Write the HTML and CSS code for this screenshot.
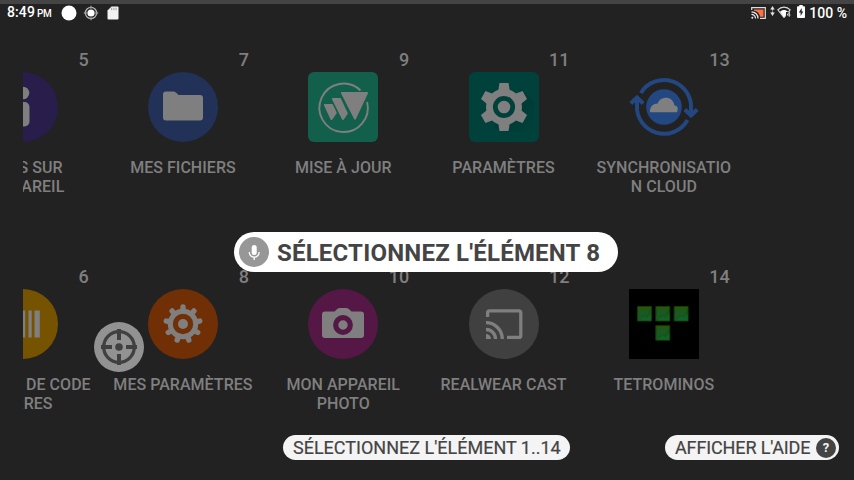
FILE: index.html
```
<!DOCTYPE html>
<html lang="fr">
<head>
<meta charset="utf-8">
<title>Applications</title>
<link rel="stylesheet" href="styles.css">
</head>
<body>
<div class="screen">
  <header class="status">
    <span class="time">8:49<small>PM</small></span>
    <svg class="dot" width="16" height="16" viewBox="0 0 16 16"><circle cx="8" cy="8" r="7.500" fill="#fff"/></svg>
    <svg class="target" width="16" height="16" viewBox="0 0 16 16"><circle cx="8" cy="8" r="5.600" fill="none" stroke="#b5b5b5" stroke-width="1.300"/><path d="M8 .8v3M8 12.200v3M.8 8h3M12.200 8h3" stroke="#999" stroke-width="1.300"/><circle cx="8" cy="8" r="3.600" fill="#fff"/></svg>
    <svg class="sd" width="12" height="14" viewBox="0 0 12 14"><path d="M4.500 .5H10.500a1 1 0 0 1 1 1v11a1 1 0 0 1-1 1h-9a1 1 0 0 1-1-1V4.500z" fill="#f2f2f2"/><path d="M4.700 1.700v2.500M6.900 1.700v2.500M9.100 1.700v2.500" stroke="#999" stroke-width="1"/></svg>
    <span class="grow"></span>
    <svg class="castmini" width="15" height="12" viewBox="0 0 15 12"><path d="M.7 3V.7h13.600v10.600H9" fill="none" stroke="#ddd" stroke-width="1.200"/><path d="M3 2.500h9.500v7.200H9.200C8.500 6.200 6 4 3 3.700z" fill="#ff7043"/><path d="M.5 4.800a6.500 6.500 0 0 1 6.500 6.700M.5 7.300a4 4 0 0 1 4 4.200" fill="none" stroke="#eee" stroke-width="1.200"/><circle cx="1.300" cy="10.800" r="1" fill="#eee"/></svg>
    <svg class="updown" width="5" height="10" viewBox="0 0 5 10"><path d="M2.500 0L4.800 3.500H3.100v1H1.900v-1H.2zM2.500 10L4.800 6.500H3.100v-1H1.900v1H.2z" fill="#ddd"/></svg>
    <svg class="wifi" width="14" height="12" viewBox="0 0 14 12"><path d="M.8 3.800C4.200.2 9.800.2 13.200 3.800L10.500 7.500 7 11.500z" fill="none" stroke="#ddd" stroke-width="1.100"/><path d="M3 5.800C5.500 3.500 8.500 3.500 11 5.800L7 11.500z" fill="#fff"/><path d="M9 6h5v6H9z" fill="#222"/><path d="M12.300 5.800v5M12.500 6L10 9h3.500" fill="none" stroke="#ddd" stroke-width=".9"/></svg>
    <svg class="battery" width="8" height="13" viewBox="0 0 8 13"><path d="M2.300 0h3.400v1.300H7a1 1 0 0 1 1 1V12a1 1 0 0 1-1 1H1a1 1 0 0 1-1-1V2.300a1 1 0 0 1 1-1h1.300z" fill="#fff"/><path d="M4.700 3L1.800 7.600h1.800V11l2.700-4.600H4.700z" fill="#222"/></svg>
    <span class="percent">100 %</span>
  </header>

  <main class="viewport">
    <div class="grid">
      <div class="item"><span class="num">5</span>
        <svg class="icon" viewBox="0 0 70 70"><circle cx="35" cy="35" r="35" fill="#281d4b"/><circle cx="35" cy="21" r="6.300" fill="#7f7f7f"/><path d="M29 30h7.500a5 5 0 0 1 5 5v14.500a5 5 0 0 1-5 5H29z" fill="#7f7f7f"/></svg>
        <span class="label">INFOS SUR<br>L'APPAREIL</span></div>
      <div class="item"><span class="num">7</span>
        <svg class="icon" viewBox="0 0 70 70"><circle cx="35" cy="35" r="35" fill="#213157"/><path d="M18 19.500h7.500q1.800 0 3 1.500l2 2H52a3 3 0 0 1 3 3v19.500a3 3 0 0 1-3 3H18a3 3 0 0 1-3-3v-23a3 3 0 0 1 3-3z" fill="#7f7f7f"/></svg>
        <span class="label">MES FICHIERS</span></div>
      <div class="item"><span class="num">9</span>
        <svg class="icon" viewBox="0 0 70 70"><rect width="70" height="70" rx="6" fill="#12604b"/><path d="M52.500 18.500A24.200 24.200 0 1 0 59.100 30" fill="none" stroke="#7f7f7f" stroke-width="1.900"/><g fill="#7f7f7f" stroke="#7f7f7f" stroke-width="2" stroke-linejoin="round"><path d="M34 21h25L47 46.500zM25 27h7l6.800 14.500L35 47zM17 33h7l3.700 8L23.500 47z"/></g></svg>
        <span class="label">MISE À JOUR</span></div>
      <div class="item"><span class="num">11</span>
        <svg class="icon" viewBox="0 0 70 70"><defs><linearGradient id="shade" x1="0" y1="0" x2="1" y2="1"><stop offset=".45" stop-color="#003a34"/><stop offset="1" stop-color="#00423b"/></linearGradient></defs><rect width="70" height="70" rx="6" fill="#00423b"/><path d="M52 17L66 31 64 60 35 60 25 55z" fill="url(#shade)"/><g fill="#7f7f7f"><circle cx="35" cy="35" r="18"/><path id="tooth" d="M29 20L30.500 11h9L41 20v30l-1.500 9h-9L29 50z"/><use href="#tooth" transform="rotate(60 35 35)"/><use href="#tooth" transform="rotate(120 35 35)"/></g><circle cx="35" cy="35" r="8.700" fill="#7f7f7f" stroke="#00423b" stroke-width="4.800"/></svg>
        <span class="label">PARAMÈTRES</span></div>
      <div class="item"><span class="num">13</span>
        <svg class="icon" viewBox="0 0 70 70"><circle cx="35" cy="35" r="17.800" fill="#234781"/><path d="M12 21A27 27 0 0 1 62 37v5M58.500 48A27 27 0 0 1 8 33v-5" fill="none" stroke="#234781" stroke-width="4"/><path d="M55.800 37.500l6.200 6 6.200-6M1.800 31.500l6.200-6 6.200 6" fill="none" stroke="#234781" stroke-width="4"/><path d="M21 40.300v-2.500q1-6 7.700-6.300c2.300-7.500 15-8.500 16.800 2 4 0 3.500 4.300 2.500 6.800z" fill="#7f7f7f"/></svg>
        <span class="label">SYNCHRONISATIO<br>N CLOUD</span></div>

      <div class="item"><span class="num">6</span>
        <svg class="icon" viewBox="0 0 70 70"><circle cx="35" cy="35" r="35" fill="#765300"/><path d="M34 21.500h3.200v27H34zM40.500 21.500h3.200v27h-3.200zM46.500 21.500h5.300v27h-5.300z" fill="#7f7f7f"/></svg>
        <span class="label">LECTEUR DE CODE<br>BARRES</span></div>
      <div class="item"><span class="num">8</span>
        <svg class="icon" viewBox="0 0 70 70"><circle cx="35" cy="35" r="35" fill="#712f05"/><circle cx="35" cy="35" r="12.700" fill="none" stroke="#7f7f7f" stroke-width="5"/><g stroke="#7f7f7f" stroke-width="5.400" stroke-linecap="round"><path id="cog" d="M35 22v-4"/><use href="#cog" transform="rotate(40 35 35)"/><use href="#cog" transform="rotate(80 35 35)"/><use href="#cog" transform="rotate(120 35 35)"/><use href="#cog" transform="rotate(160 35 35)"/><use href="#cog" transform="rotate(200 35 35)"/><use href="#cog" transform="rotate(240 35 35)"/><use href="#cog" transform="rotate(280 35 35)"/><use href="#cog" transform="rotate(320 35 35)"/></g><circle cx="35" cy="35" r="5" fill="#7f7f7f"/></svg>
        <span class="label">MES PARAMÈTRES</span></div>
      <div class="item"><span class="num">10</span>
        <svg class="icon" viewBox="0 0 70 70"><circle cx="35" cy="35" r="35" fill="#551745"/><path d="M17 22.500h9.500l3-2.700q1-.8 2.500-.8h6q1.500 0 2.500.8l3 2.700H53a3 3 0 0 1 3 3V46a3 3 0 0 1-3 3H17a3 3 0 0 1-3-3V25.500a3 3 0 0 1 3-3z" fill="#7f7f7f"/><circle cx="35" cy="36" r="7.300" fill="#7f7f7f" stroke="#551745" stroke-width="5.200"/></svg>
        <span class="label">MON APPAREIL<br>PHOTO</span></div>
      <div class="item"><span class="num">12</span>
        <svg class="icon" viewBox="0 0 70 70"><circle cx="35" cy="35" r="35" fill="#404040"/><g fill="none" stroke="#7f7f7f" stroke-width="3.300"><path d="M18.600 28v-4.200a2 2 0 0 1 2-2h29.200a2 2 0 0 1 2 2v22.600a2 2 0 0 1-2 2H38"/><path d="M17 33.700A16.300 16.300 0 0 1 33.300 50M17 40.500A9.500 9.500 0 0 1 26.500 50"/></g><path d="M17 45a5 5 0 0 1 5 5h-5z" fill="#7f7f7f"/></svg>
        <span class="label">REALWEAR CAST</span></div>
      <div class="item"><span class="num">14</span>
        <svg class="icon" viewBox="0 0 70 70"><defs><linearGradient id="gem" x1="0" y1="0" x2="0" y2="1"><stop offset="0" stop-color="#2d5a00"/><stop offset=".35" stop-color="#185414"/><stop offset="1" stop-color="#0b5f1b"/></linearGradient></defs><path d="M0 0h70v70H0z"/><g id="block"><path d="M8.500 17.500h14v14.500h-14z" fill="url(#gem)" stroke="#123d00"/><path d="M10 20h11l-3 7-4-1-5 5z" fill="#1c5821"/><path d="M10 31.500l5-4.500 3 2 4-4v6.500z" fill="#146129"/></g><use href="#block" x="18.300"/><use href="#block" x="36.600"/><use href="#block" x="18.300" y="19.200"/></svg>
        <span class="label">TETROMINOS</span></div>
    </div>
  </main>

  <svg class="cursor" viewBox="0 0 50 50"><circle cx="25" cy="25" r="25" fill="#929292"/><circle cx="25" cy="25" r="15.300" fill="none" stroke="#404040" stroke-width="3.300"/><path d="M25 7v11M25 32v11M7 25h11M32 25h11" stroke="#404040" stroke-width="4"/><circle cx="25" cy="25" r="3.800" fill="#404040"/></svg>

  <div class="command">
    <svg width="30" height="30" viewBox="0 0 30 30"><circle cx="15" cy="15" r="15" fill="#979797"/><rect x="12.700" y="8" width="5" height="10" rx="2.500" fill="#fff"/><path d="M10.300 15v.3a4.900 4.900 0 0 0 9.800 0V15M15.200 20v3" fill="none" stroke="#fff" stroke-width="1.300"/></svg>
    <span class="command-text">SÉLECTIONNEZ L'ÉLÉMENT 8</span>
  </div>

  <footer class="hints">
    <span class="hint range"><span class="range-text">SÉLECTIONNEZ L'ÉLÉMENT 1..14</span></span>
    <span class="hint help"><span class="help-text">AFFICHER L'AIDE</span><b>?</b></span>
  </footer>
</div>
</body>
</html>
```
FILE: styles.css
```
* { box-sizing: border-box; }
body { margin: 0; background: #222; font-family: Roboto, sans-serif; }
.screen {
  position: relative;
  width: 854px;
  height: 480px;
  overflow: hidden;
  background: #222;
  border-top: 4px solid #444;
  display: flex;
  flex-direction: column;
}
.status {
  height: 18px;
  padding: 0 8px 0 7px;
  display: flex;
  align-items: center;
  color: #fff;
  font-size: 14px;
  font-weight: 500;
  line-height: 18px;
  white-space: nowrap;
}
.status svg { flex: none; }
.dot { margin-top: -1px; }
.time { width: 54px; letter-spacing: .1px; }
.time small { font-size: 10px; margin-left: 2px; letter-spacing: -.3px; }
.target { margin: -1px 0 0 6px; }
.sd { margin: -1px 0 0 8px; }
.grow { flex: 1; }
.castmini { margin-top: -1px; }
.updown { margin: 0 2px 4px 4px; }
.wifi { margin-top: -2px; }
.battery { margin: 0 4px 3px 6px; }
.percent { margin-right: -1px; }
.viewport { height: 406px; margin: 0 23px; overflow: hidden; flex: none; }
.grid {
  width: 801.500px;
  margin: 28px 0 0 -80.500px;
  display: grid;
  grid-template-columns: repeat(5, 160.300px);
  grid-auto-rows: 217px;
}
.item { display: flex; flex-direction: column; align-items: center; color: #7f7f7f; }
.num { width: 132px; height: 20px; line-height: 20px; text-align: right; font-size: 18px; font-weight: 500; }
.icon { width: 70px; height: 70px; margin-top: 2px; flex: none; }
.label {
  margin-top: 16px;
  font-size: 16px;
  font-weight: 500;
  line-height: 19px;
  letter-spacing: .03px;
  text-align: center;
  white-space: nowrap;
}
.cursor { position: absolute; left: 94px; top: 318px; width: 50px; height: 50px; }
.command {
  position: absolute;
  left: 234px;
  top: 228px;
  width: 384px;
  height: 40px;
  border-radius: 20px;
  padding: 2px 0 0 5px;
  background: #fff;
  color: #444;
  display: flex;
  align-items: center;
  gap: 8px;
  font-size: 24px;
  font-weight: 700;
  letter-spacing: .2px;
  white-space: nowrap;
}
.command svg { margin-top: -2px; }
.hints {
  display: grid;
  grid-template-columns: 287px 174px;
  justify-content: end;
  column-gap: 95px;
  padding: 7px 15px 0 0;
}
.hint {
  height: 25px;
  border-radius: 13px;
  background: #f4f4f4;
  color: #444;
  display: flex;
  align-items: center;
  padding: 0 3px 0 10px;
  font-size: 18px;
  white-space: nowrap;
  -webkit-text-stroke: .2px #444;
}
.help { justify-content: space-between; letter-spacing: -.13px; }
.help b {
  width: 20px;
  height: 20px;
  border-radius: 50%;
  background: #444;
  color: #f4f4f4;
  font-size: 13px;
  line-height: 20px;
  text-align: center;
  -webkit-text-stroke: 0;
}
```
